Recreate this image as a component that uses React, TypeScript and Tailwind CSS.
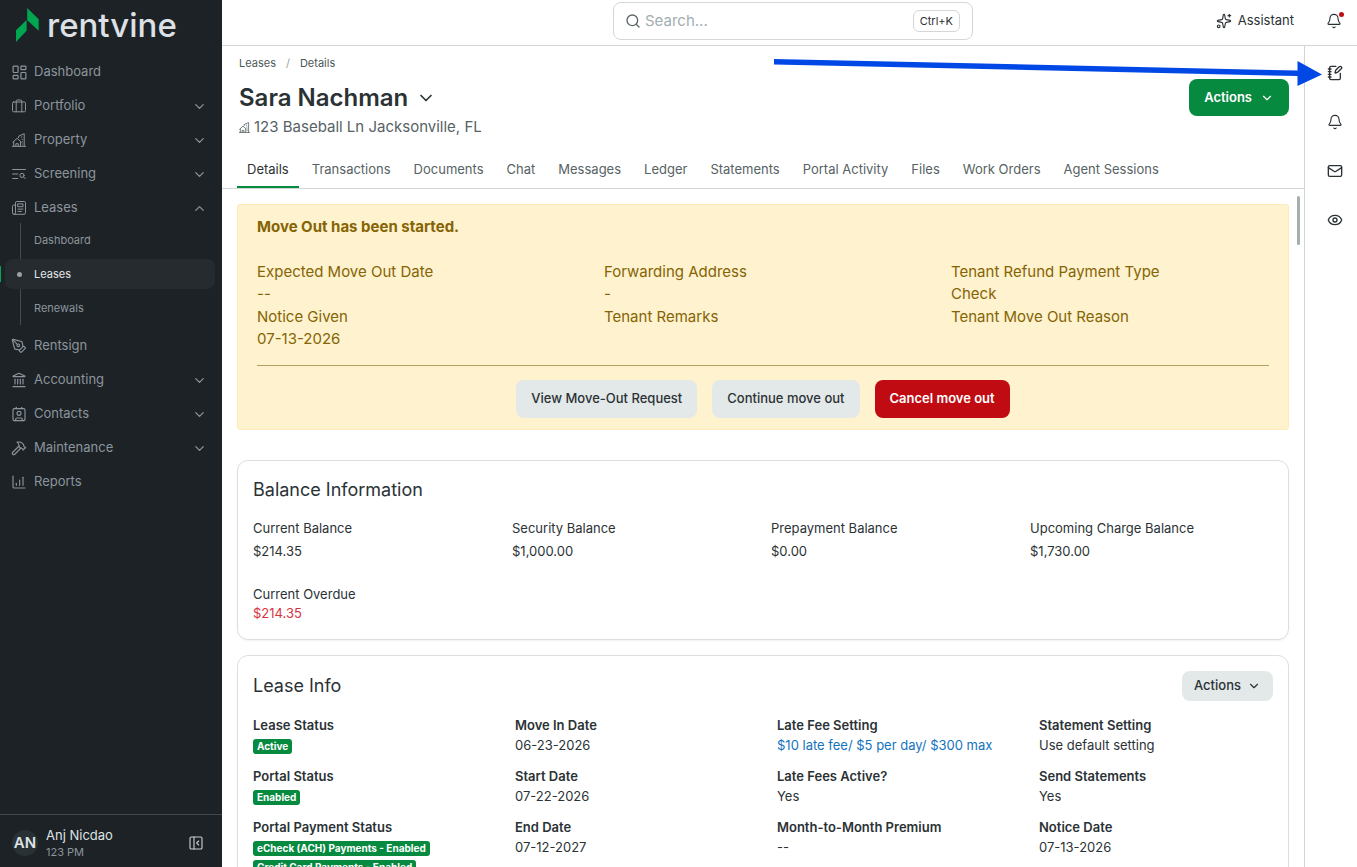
import React from 'react';
import {
  Bell, ChartColumnIncreasing, ChevronDown, ChevronUp, Contact, Eye, Hammer, Landmark,
  LayoutDashboard, Mail, NotebookPen, PanelLeftClose, PenTool, Search, Sparkles,
} from 'lucide-react';

type IconProps = { className?: string; size?: number };

const Glyph = ({ className, size = 14, children }: IconProps & { children: React.ReactNode }) => (
  <svg viewBox="0 0 14 14" width={size} height={size} fill="none" stroke="currentColor" strokeLinecap="round" strokeLinejoin="round" className={className}>
    {children}
  </svg>
);

const SuitcaseIcon = (p: IconProps) => (
  <Glyph {...p}>
    <rect x="0.5" y="3" width="13" height="9.8" rx="1.2" />
    <path d="M4.2 12.8V2.2a1.2 1.2 0 0 1 1.2-1.2h3.2a1.2 1.2 0 0 1 1.2 1.2v10.6" />
  </Glyph>
);

const PropertyIcon = (p: IconProps) => (
  <Glyph {...p}>
    <path d="M0.3 13.3h13.4M1.7 13.3V8.6M8.5 13.3V8.6M0.9 9.1l4.2-3.8 4.2 3.8M3.9 13.3v-2.6h2.4v2.6" />
    <path d="M6.6 4.6V3.2l5.6-2.5v12.6" />
    <path d="M9.3 4h.5M9.9 6.4h.4M10.4 8.8h.1M10.4 11h.1" />
  </Glyph>
);

const ScreeningIcon = (p: IconProps) => (
  <Glyph {...p}>
    <path d="M0.6 2.5h12.8M0.6 7h5.2M0.6 11.5h5.2" />
    <circle cx="10" cy="8.4" r="2.1" />
    <path d="M11.6 10l1.7 1.7" />
  </Glyph>
);

const LeaseIcon = (p: IconProps) => (
  <Glyph {...p}>
    <path d="M3.4 4.2H1.7A1.2 1.2 0 0 0 .5 5.4v6.4a1.5 1.5 0 0 0 3 0V1.7A1.2 1.2 0 0 1 4.7.5h7.6a1.2 1.2 0 0 1 1.2 1.2v10.1a1.5 1.5 0 0 1-1.5 1.5H2" />
    <rect x="6" y="2.9" width="5" height="2.8" />
    <path d="M6 8.1h5M6 10.4h3.4" />
  </Glyph>
);

const line = 'shrink-0 stroke-[1.7]';

const navTop = [
  { label: 'Dashboard', icon: <LayoutDashboard size={17} className={line} />, caret: false },
  { label: 'Portfolio', icon: <SuitcaseIcon />, caret: true },
  { label: 'Property', icon: <PropertyIcon />, caret: true },
  { label: 'Screening', icon: <ScreeningIcon />, caret: true },
];

const navBottom = [
  { label: 'Rentsign', icon: <PenTool size={16} className={line} />, caret: false },
  { label: 'Accounting', icon: <Landmark size={16} className={line} />, caret: true },
  { label: 'Contacts', icon: <Contact size={16} className={line} />, caret: true },
  { label: 'Maintenance', icon: <Hammer size={16} className={line} />, caret: true },
  { label: 'Reports', icon: <ChartColumnIncreasing size={16} className={line} />, caret: false },
];

const subLeases = ['Dashboard', 'Leases', 'Renewals'];

const NavRow = ({ label, icon, caret, open }: { label: string; icon: React.ReactNode; caret: boolean; open?: boolean }) => (
  <button type="button" className="flex h-[34px] w-full items-center pr-[15px] pl-2.5 text-left text-[13px]">
    <span className="flex w-[18px] justify-center">{icon}</span>
    <span className="ml-1.5 flex-1">{label}</span>
    {caret && (open ? <ChevronUp size={15} className="stroke-2" /> : <ChevronDown size={15} className="stroke-2" />)}
  </button>
);

const Sidebar = () => (
  <aside className="flex w-[222px] shrink-0 flex-col bg-[#1d2226] text-[#8c959d]">
    <a href="#home" className="flex h-[55px] shrink-0 items-start gap-2 pl-4 text-[#dde0e4]">
      <svg viewBox="0 0 23 34" width="23" height="34" className="mt-2 shrink-0">
        <path d="M11.2 0L22.7 11.3V22.7L11.2 12.3Z" fill="#00a650" />
        <path d="M0 22.3L10.6 11.9V22.8L0 34Z" fill="#00a650" />
      </svg>
      <span className="mt-[7px] text-[33px] leading-9 font-medium">rentvine</span>
    </a>
    <nav className="flex-1">
      {navTop.map((item) => <NavRow key={item.label} {...item} />)}
      <NavRow label="Leases" icon={<LeaseIcon />} caret open />
      <ul className="relative -mt-0.5 mb-1 text-[11px]">
        <li aria-hidden className="absolute inset-y-0 left-5 w-px bg-[#444b50]" />
        {subLeases.map((label) => (
          <li key={label} className="relative flex h-[34px] items-center">
            {label === 'Leases' ? (
              <>
                <span className="absolute left-0 h-4 w-px bg-[#00a650]" />
                <a href="#leases" className="mr-[7px] ml-[5px] flex h-[30px] flex-1 items-center rounded-lg bg-[#262b2f] pl-3 text-[#e6e8ea]">
                  <span className="mr-3 size-[5px] rounded-full bg-[#9aa2a8]" />
                  {label}
                </a>
              </>
            ) : (
              <a href={`#${label.toLowerCase()}`} className="flex-1 pl-[34px]">{label}</a>
            )}
          </li>
        ))}
      </ul>
      {navBottom.map((item) => <NavRow key={item.label} {...item} />)}
    </nav>
    <footer className="flex h-[53px] shrink-0 items-center border-t border-[#41474b] pt-1 pr-[18px] pl-3">
      <span className="flex size-[26px] items-center justify-center rounded-full bg-[#293134] text-[15px] font-semibold text-[#dfe2e5]">AN</span>
      <div className="ml-2 flex-1">
        <div className="text-[13px] leading-[17px] text-[#dfe2e5]">Anj Nicdao</div>
        <div className="text-[11px] leading-4">123 PM</div>
      </div>
      <button type="button" aria-label="Collapse menu" className="text-[#c9ced2]"><PanelLeftClose size={16} className={line} /></button>
    </footer>
  </aside>
);

const TopBar = () => (
  <header className="flex h-[46px] shrink-0 items-start border-b border-[#d0d5d6] pl-[22px]">
    <div className="flex-1" />
    <label className="mt-0.5 flex h-[38px] w-[360px] items-center rounded-lg border border-[#d3d7d8] pr-3 pl-[11px]">
      <Search size={16} className="shrink-0 stroke-2 text-[#5b6669]" />
      <input type="text" aria-label="Search" placeholder="Search..." className="ml-1 min-w-0 flex-1 bg-transparent text-[15px] outline-none placeholder:text-[#a3aeb0]" />
      <kbd className="flex h-[22px] items-center rounded-md border border-[#d3d7d8] px-1.5 font-[Inter,sans-serif] text-[11px] text-[#2b3235]">Ctrl+K</kbd>
    </label>
    <div className="flex h-[42px] flex-1 items-center justify-end pr-[15px]">
      <button type="button" className="flex items-center gap-1.5 text-[13px]">
        <Sparkles size={16} className={line} />
        Assistant
      </button>
      <button type="button" aria-label="Notifications" className="relative ml-8">
        <Bell size={16} className={line} />
        <span className="absolute -top-px -right-0.5 size-[5px] rounded-full bg-[#c20d12]" />
      </button>
    </div>
  </header>
);

const tabs = ['Details', 'Transactions', 'Documents', 'Chat', 'Messages', 'Ledger', 'Statements', 'Portal Activity', 'Files', 'Work Orders', 'Agent Sessions'];

const PageHeader = () => (
  <div className="shrink-0 border-b border-[#d0d5d6] px-[15px]">
    <div className="flex items-start justify-between">
      <div className="pl-0.5">
        <nav aria-label="Breadcrumb" className="mt-2 flex gap-2.5 text-[11px] leading-[18px] text-[#4c5759]">
          <a href="#leases">Leases</a>
          <span className="text-[#98a2a4]">/</span>
          <a href="#details">Details</a>
        </nav>
        <div className="mt-2.5 flex items-center gap-2">
          <h1 className="text-2xl font-semibold text-[#2b3235]">Sara Nachman</h1>
          <button type="button" aria-label="Switch tenant"><ChevronDown size={20} className="stroke-2" /></button>
        </div>
        <div className="mt-px flex items-center gap-1 text-[15px] leading-6 text-[#566264]">
          <PropertyIcon size={11} />
          123 Baseball Ln Jacksonville, FL
        </div>
      </div>
      <button type="button" className="mt-[33px] flex h-[37px] items-center gap-2 rounded-lg bg-[#068a3f] px-[15px] text-[13px] font-semibold text-white">
        Actions
        <ChevronDown size={14} />
      </button>
    </div>
    <nav aria-label="Lease sections" className="mt-[13px] flex gap-[3px] text-[13px] text-[#566264]">
      {tabs.map((tab, i) => (
        <a
          key={tab}
          href={`#${tab.toLowerCase().replace(' ', '-')}`}
          className={i === 0 ? 'h-9 border-b-2 border-[#068a3f] px-[10px] leading-[34px] text-[#2b3235]' : 'h-9 px-[10px] leading-[34px]'}
        >
          {tab}
        </a>
      ))}
    </nav>
  </div>
);

const MoveOutAlert = () => (
  <section className="rounded-[3px] border border-[#ffeaba] bg-[#fff2cf] px-[19px] pt-[11px] pb-[11px] text-[15px] leading-normal text-[#856404]">
    <h2 className="font-bold">Move Out has been started.</h2>
    <div className="mt-[22px] grid grid-cols-3 gap-[29px]">
      <div>
        <div>Expected Move Out Date</div>
        <div>--</div>
        <div>Notice Given</div>
        <div>07-13-2026</div>
      </div>
      <div>
        <div>Forwarding Address</div>
        <div>-</div>
        <div>Tenant Remarks</div>
      </div>
      <div>
        <div>Tenant Refund Payment Type</div>
        <div>Check</div>
        <div>Tenant Move Out Reason</div>
      </div>
    </div>
    <hr className="mt-[14px] border-[#b5a15f]" />
    <div className="mt-[14px] flex justify-center gap-[15px] text-[13px] font-medium text-[#2b3235]">
      <button type="button" className="h-[38px] rounded-lg bg-[#e3e8e9] px-[15px]">View Move-Out Request</button>
      <button type="button" className="h-[38px] rounded-lg bg-[#e3e8e9] px-[15px]">Continue move out</button>
      <button type="button" className="h-[38px] rounded-lg bg-[#c10b12] px-[15px] font-semibold text-white">Cancel move out</button>
    </div>
  </section>
);

const balances = [
  ['Current Balance', '$214.35'],
  ['Security Balance', '$1,000.00'],
  ['Prepayment Balance', '$0.00'],
  ['Upcoming Charge Balance', '$1,730.00'],
];

const BalanceCard = () => (
  <section className="mt-[30px] rounded-[11px] border border-[#dcdfe0] px-[15px] pt-[15px] pb-[17px] text-[13px] shadow-xs">
    <h2 className="text-lg">Balance Information</h2>
    <dl className="mt-[13px] grid grid-cols-4 gap-x-4">
      {balances.map(([label, value]) => (
        <div key={label}>
          <dt className="leading-[22px]">{label}</dt>
          <dd className="leading-6">{value}</dd>
        </div>
      ))}
      <div className="mt-[21px]">
        <dt className="leading-5">Current Overdue</dt>
        <dd className="leading-[18px] text-[#d63341]">$214.35</dd>
      </div>
    </dl>
  </section>
);

const leaseColumns: { label: string; value?: string; link?: boolean; badges?: string[] }[][] = [
  [
    { label: 'Lease Status', badges: ['Active'] },
    { label: 'Portal Status', badges: ['Enabled'] },
    { label: 'Portal Payment Status', badges: ['eCheck (ACH) Payments - Enabled', 'Credit Card Payments - Enabled'] },
  ],
  [
    { label: 'Move In Date', value: '06-23-2026' },
    { label: 'Start Date', value: '07-22-2026' },
    { label: 'End Date', value: '07-12-2027' },
  ],
  [
    { label: 'Late Fee Setting', value: '$10 late fee/ $5 per day/ $300 max', link: true },
    { label: 'Late Fees Active?', value: 'Yes' },
    { label: 'Month-to-Month Premium', value: '--' },
  ],
  [
    { label: 'Statement Setting', value: 'Use default setting' },
    { label: 'Send Statements', value: 'Yes' },
    { label: 'Notice Date', value: '07-13-2026' },
  ],
];

const LeaseInfoCard = () => (
  <section className="mt-[15px] rounded-[11px] border border-[#dcdfe0] px-[15px] py-[15px] text-[13px]">
    <div className="flex items-center justify-between">
      <h2 className="text-lg">Lease Info</h2>
      <button type="button" className="flex h-[30px] items-center gap-1.5 rounded-lg bg-[#e3e8e9] px-3 font-medium">
        Actions
        <ChevronDown size={14} />
      </button>
    </div>
    <div className="mt-[14px] grid grid-cols-4 gap-7">
      {leaseColumns.map((fields, i) => (
        <dl key={i} className="flex flex-col gap-[11px]">
          {fields.map(({ label, value, link, badges }) => (
            <div key={label}>
              <dt className="leading-5 font-semibold">{label}</dt>
              {value && <dd className="leading-5">{link ? <a href="#late-fee" className="text-[#1473be]">{value}</a> : value}</dd>}
              {badges && (
                <dd className="flex flex-col items-start gap-1 pt-1 pb-px">
                  {badges.map((b) => (
                    <span key={b} className="h-[15px] rounded-[3px] bg-[#068a3f] px-1 text-[10px] leading-[15px] font-bold text-white">{b}</span>
                  ))}
                </dd>
              )}
            </div>
          ))}
        </dl>
      ))}
    </div>
  </section>
);

const Rail = () => (
  <aside className="flex w-[53px] shrink-0 flex-col items-center gap-[33px] border-l border-[#d0d5d6] pt-[19px] pl-[7px]">
    <button type="button" aria-label="Notes"><NotebookPen size={16} className="stroke-2" /></button>
    <button type="button" aria-label="Alerts"><Bell size={16} className={line} /></button>
    <button type="button" aria-label="Email"><Mail size={16} className="stroke-2" /></button>
    <button type="button" aria-label="Watch"><Eye size={16} className="stroke-2" /></button>
  </aside>
);

const Pointer = () => (
  <svg viewBox="0 0 550 30" width="550" height="30" className="pointer-events-none absolute top-[58px] right-[34px]">
    <path d="M1 1L525 12.5V18L1 6.5Z" fill="#0048e6" />
    <path d="M524.5 3L549 16.5L524.5 28Z" fill="#0048e6" />
  </svg>
);

export default function App() {
  return (
    <div className="relative flex h-screen overflow-hidden bg-white font-[Inter,'Liberation_Sans',sans-serif] text-[#2b3235] [&_button]:cursor-pointer [&_svg]:block">
      <Sidebar />
      <div className="flex min-w-0 flex-1 flex-col">
        <TopBar />
        <div className="flex min-h-0 flex-1">
          <main className="flex min-w-0 flex-1 flex-col">
            <PageHeader />
            <div className="relative min-h-0 flex-1 overflow-hidden px-[15px] pt-[15px]">
              <MoveOutAlert />
              <BalanceCard />
              <LeaseInfoCard />
              <span className="absolute top-[7px] right-1 h-[49px] w-[3px] rounded-full bg-[#a5afb0]" />
            </div>
          </main>
          <Rail />
        </div>
      </div>
      <Pointer />
    </div>
  );
}
